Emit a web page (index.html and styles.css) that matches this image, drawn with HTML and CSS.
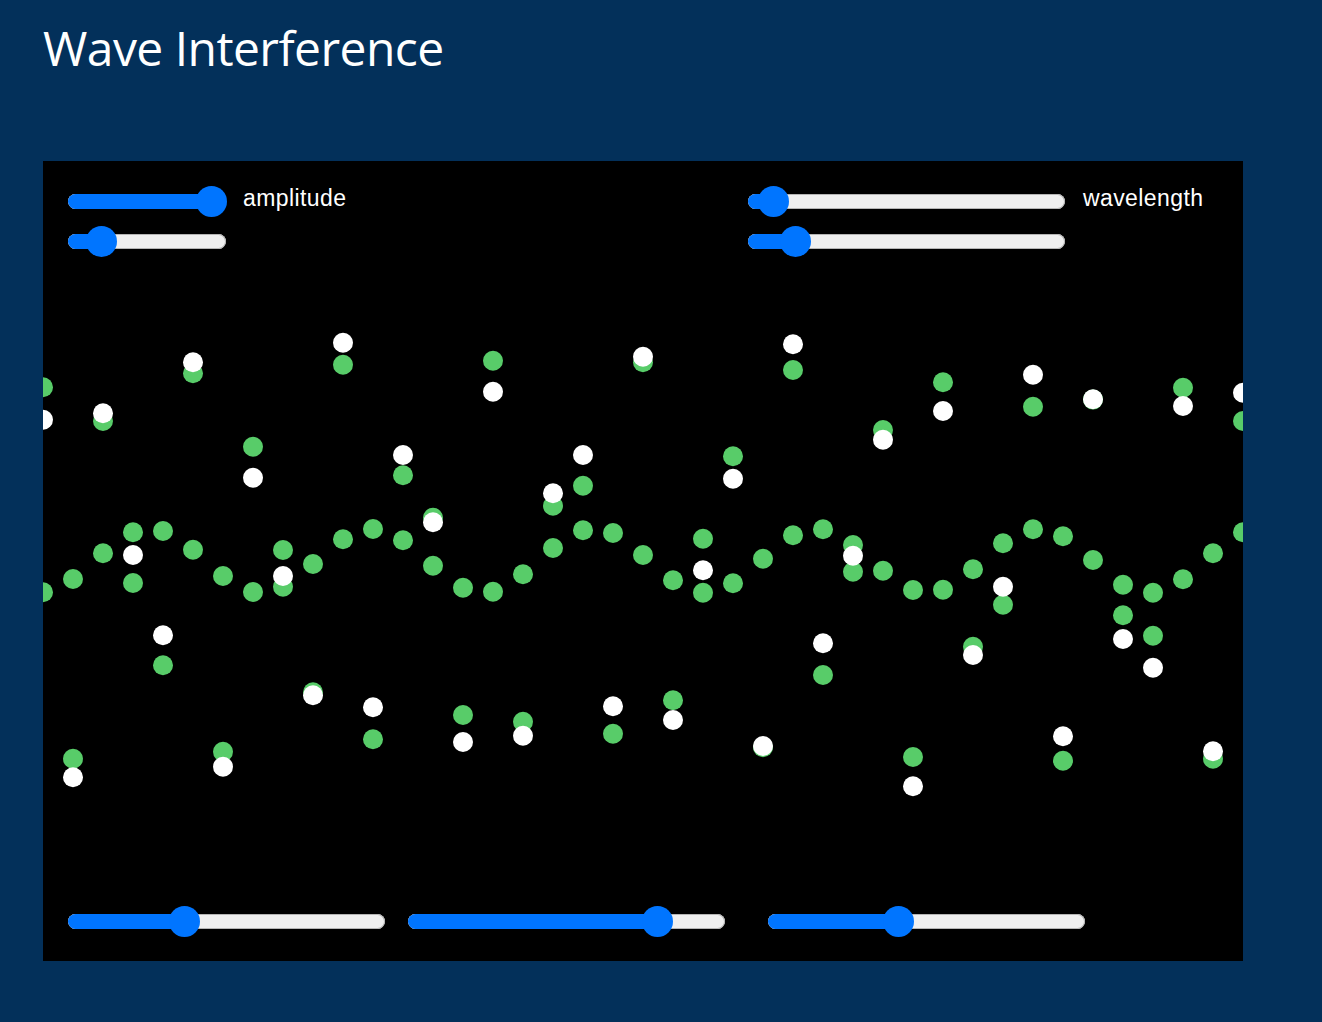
FILE: index.html
```html
<!DOCTYPE html>
<html lang="en">
<head>
<meta charset="utf-8">
<title>Wave Interference</title>
<link rel="stylesheet" href="styles.css">
</head>
<body>
  <h1 class="title">Wave Interference</h1>
  <main class="stage">
    <svg class="field" width="1200" height="800" viewBox="0 0 1200 800" aria-hidden="true">
      <g transform="translate(0 -161)">
        <g class="dots dots-green">
          <circle r="10" cx="0" cy="592.3"/><circle r="10" cx="30" cy="579"/><circle r="10" cx="60" cy="553.3"/><circle r="10" cx="90" cy="532.3"/><circle r="10" cx="120" cy="531"/><circle r="10" cx="150" cy="549.7"/><circle r="10" cx="180" cy="576"/><circle r="10" cx="210" cy="592"/><circle r="10" cx="240" cy="586.7"/><circle r="10" cx="270" cy="564"/><circle r="10" cx="300" cy="539.3"/><circle r="10" cx="330" cy="529"/><circle r="10" cx="360" cy="540.3"/><circle r="10" cx="390" cy="565.7"/><circle r="10" cx="420" cy="587.7"/><circle r="10" cx="450" cy="591.7"/><circle r="10" cx="480" cy="574.3"/><circle r="10" cx="510" cy="548"/><circle r="10" cx="540" cy="530.3"/><circle r="10" cx="570" cy="533"/><circle r="10" cx="600" cy="555"/><circle r="10" cx="630" cy="580.3"/><circle r="10" cx="660" cy="592.7"/><circle r="10" cx="690" cy="583.3"/><circle r="10" cx="720" cy="558.7"/><circle r="10" cx="750" cy="535.3"/><circle r="10" cx="780" cy="529.3"/><circle r="10" cx="810" cy="545"/><circle r="10" cx="840" cy="570.7"/><circle r="10" cx="870" cy="590"/><circle r="10" cx="900" cy="589.7"/><circle r="10" cx="930" cy="569.3"/><circle r="10" cx="960" cy="543.3"/><circle r="10" cx="990" cy="529.3"/><circle r="10" cx="1020" cy="536.3"/><circle r="10" cx="1050" cy="560"/><circle r="10" cx="1080" cy="584.7"/><circle r="10" cx="1110" cy="592.7"/><circle r="10" cx="1140" cy="579.3"/><circle r="10" cx="1170" cy="553.3"/><circle r="10" cx="1200" cy="532.3"/>
          <circle r="10" cx="0" cy="387.3"/><circle r="10" cx="30" cy="758.7"/><circle r="10" cx="60" cy="421"/><circle r="10" cx="90" cy="583"/><circle r="10" cx="120" cy="665.3"/><circle r="10" cx="150" cy="373.3"/><circle r="10" cx="180" cy="751.7"/><circle r="10" cx="210" cy="446.7"/><circle r="10" cx="240" cy="550"/><circle r="10" cx="270" cy="692.3"/><circle r="10" cx="300" cy="364.7"/><circle r="10" cx="330" cy="739.3"/><circle r="10" cx="360" cy="475.3"/><circle r="10" cx="390" cy="517.7"/><circle r="10" cx="420" cy="715"/><circle r="10" cx="450" cy="360.7"/><circle r="10" cx="480" cy="721.7"/><circle r="10" cx="510" cy="505.7"/><circle r="10" cx="540" cy="485.7"/><circle r="10" cx="570" cy="733.7"/><circle r="10" cx="600" cy="362.3"/><circle r="10" cx="630" cy="700.3"/><circle r="10" cx="660" cy="538.7"/><circle r="10" cx="690" cy="456.3"/><circle r="10" cx="720" cy="747.3"/><circle r="10" cx="750" cy="370"/><circle r="10" cx="780" cy="675"/><circle r="10" cx="810" cy="571.7"/><circle r="10" cx="840" cy="430"/><circle r="10" cx="870" cy="757"/><circle r="10" cx="900" cy="382.3"/><circle r="10" cx="930" cy="646.7"/><circle r="10" cx="960" cy="604.7"/><circle r="10" cx="990" cy="406.7"/><circle r="10" cx="1020" cy="760.7"/><circle r="10" cx="1050" cy="399.6"/><circle r="10" cx="1080" cy="615.3"/><circle r="10" cx="1110" cy="635.7"/><circle r="10" cx="1140" cy="387.7"/><circle r="10" cx="1170" cy="758.7"/><circle r="10" cx="1200" cy="421"/>
        </g>
        <g class="dots dots-white">
          <circle r="10" cx="0" cy="419.7"/><circle r="10" cx="30" cy="777.3"/><circle r="10" cx="60" cy="413.3"/><circle r="10" cx="90" cy="555"/><circle r="10" cx="120" cy="635.3"/><circle r="10" cx="150" cy="362.3"/><circle r="10" cx="180" cy="766.7"/><circle r="10" cx="210" cy="477.7"/><circle r="10" cx="240" cy="576"/><circle r="10" cx="270" cy="695.3"/><circle r="10" cx="300" cy="342.7"/><circle r="10" cx="330" cy="707.3"/><circle r="10" cx="360" cy="455"/><circle r="10" cx="390" cy="522.3"/><circle r="10" cx="420" cy="742"/><circle r="10" cx="450" cy="391.7"/><circle r="10" cx="480" cy="735.7"/><circle r="10" cx="510" cy="493.3"/><circle r="10" cx="540" cy="455"/><circle r="10" cx="570" cy="706.3"/><circle r="10" cx="600" cy="356.7"/><circle r="10" cx="630" cy="720"/><circle r="10" cx="660" cy="570.3"/><circle r="10" cx="690" cy="478.7"/><circle r="10" cx="720" cy="746"/><circle r="10" cx="750" cy="344.3"/><circle r="10" cx="780" cy="643.3"/><circle r="10" cx="810" cy="555.7"/><circle r="10" cx="840" cy="439.7"/><circle r="10" cx="870" cy="786.3"/><circle r="10" cx="900" cy="411"/><circle r="10" cx="930" cy="655"/><circle r="10" cx="960" cy="586.7"/><circle r="10" cx="990" cy="374.7"/><circle r="10" cx="1020" cy="736.3"/><circle r="10" cx="1050" cy="399.3"/><circle r="10" cx="1080" cy="639"/><circle r="10" cx="1110" cy="667.7"/><circle r="10" cx="1140" cy="406"/><circle r="10" cx="1170" cy="751.3"/><circle r="10" cx="1200" cy="392.7"/>
        </g>
      </g>
    </svg>

    <div class="controls">
      <div class="top-row">
        <div class="group group-left">
          <div class="stack stack-short">
            <div class="slider"><div class="track" style="--v:143.5px"><div class="fill"></div><div class="thumb"></div></div></div>
            <div class="slider"><div class="track" style="--v:33.7px"><div class="fill"></div><div class="thumb"></div></div></div>
          </div>
          <span class="label">amplitude</span>
        </div>
        <div class="group group-right">
          <div class="stack stack-long">
            <div class="slider"><div class="track" style="--v:25px"><div class="fill"></div><div class="thumb"></div></div></div>
            <div class="slider"><div class="track" style="--v:47px"><div class="fill"></div><div class="thumb"></div></div></div>
          </div>
          <span class="label">wavelength</span>
        </div>
      </div>
      <div class="bottom-row">
        <div class="slider slider-long"><div class="track" style="--v:116px"><div class="fill"></div><div class="thumb"></div></div></div>
        <div class="slider slider-long"><div class="track" style="--v:249px"><div class="fill"></div><div class="thumb"></div></div></div>
        <div class="slider slider-long slider-far"><div class="track" style="--v:130.5px"><div class="fill"></div><div class="thumb"></div></div></div>
      </div>
    </div>
  </main>
</body>
</html>
```

FILE: styles.css
```css
html, body {
  margin: 0;
  padding: 0;
}

body {
  background: #03305a;
  padding: 24px 0 0 43px;
  min-height: 1022px;
  box-sizing: border-box;
}

.title {
  margin: 0 0 89px 0;
  font-family: "Open Sans", "Noto Sans", sans-serif;
  font-weight: 400;
  font-size: 48px;
  line-height: 48px;
  letter-spacing: -0.55px;
  color: #ffffff;
}

.stage {
  position: relative;
  display: block;
  width: 1200px;
  height: 800px;
  background: #000000;
}

.field {
  position: absolute;
  left: 0;
  top: 0;
  display: block;
  overflow: hidden;
}

.dots-green circle {
  fill: #58cc69;
}

.dots-white circle {
  fill: #ffffff;
}

.controls {
  position: absolute;
  inset: 0;
  display: flex;
  flex-direction: column;
  justify-content: space-between;
  padding: 24.5px 0 24.5px 25px;
}

.top-row {
  display: flex;
  align-items: flex-start;
}

.group {
  display: flex;
  align-items: flex-start;
}

.group-left {
  width: 680px;
  gap: 17px;
}

.group-right {
  gap: 18px;
}

.stack {
  display: flex;
  flex-direction: column;
  gap: 9px;
}

.stack-short {
  width: 158px;
}

.stack-long {
  width: 317px;
}

.label {
  font-family: "Liberation Sans", Arial, sans-serif;
  font-size: 23px;
  line-height: 24px;
  letter-spacing: 0.4px;
  color: #ffffff;
}

.bottom-row {
  display: flex;
  gap: 23px;
}

.slider {
  height: 31px;
  display: flex;
  align-items: center;
}

.slider-long {
  width: 317px;
}

.slider-far {
  margin-left: 20px;
}

.track {
  position: relative;
  flex: 1;
  height: 15px;
  border-radius: 7.5px;
  background: #efefef;
  box-shadow: inset 0 0 0 1px #b4b4b4;
}

.fill {
  position: absolute;
  left: 0;
  top: 0;
  bottom: 0;
  width: var(--v);
  background: #0075ff;
  border-radius: 7.5px 0 0 7.5px;
}

.thumb {
  position: absolute;
  top: 50%;
  left: var(--v);
  width: 31px;
  height: 31px;
  margin: -15.5px 0 0 -15.5px;
  border-radius: 50%;
  background: #0075ff;
}
```
